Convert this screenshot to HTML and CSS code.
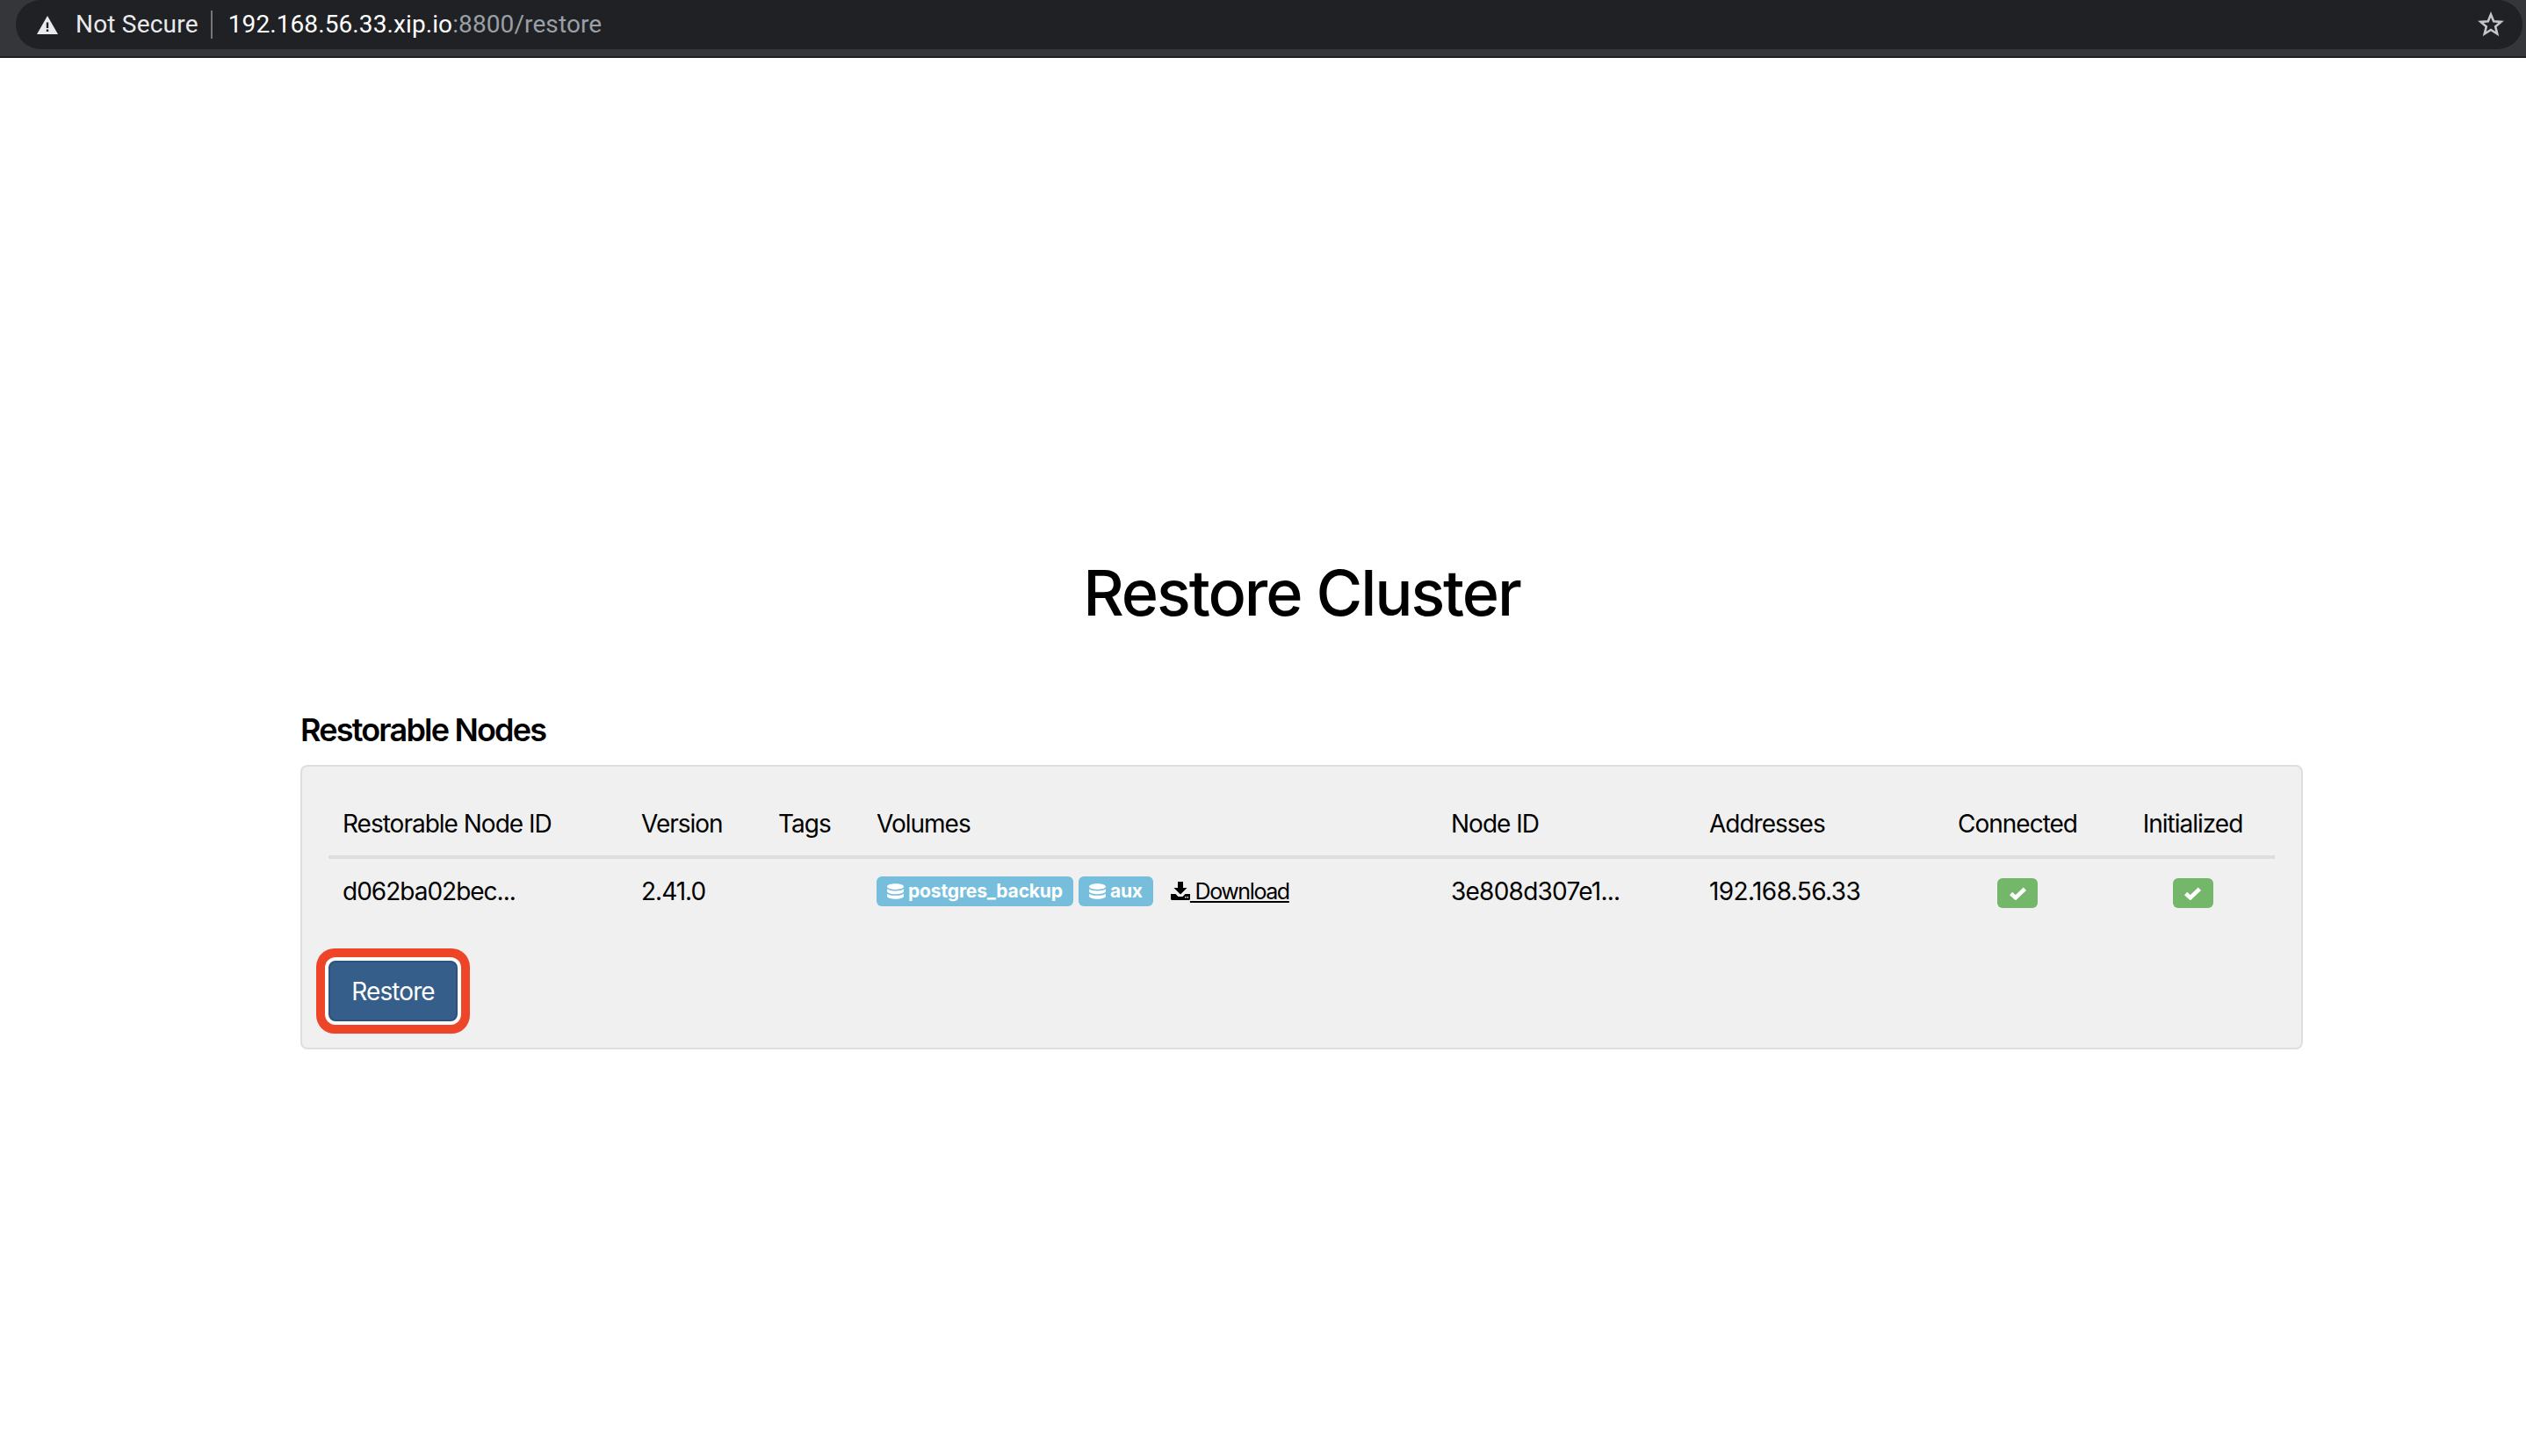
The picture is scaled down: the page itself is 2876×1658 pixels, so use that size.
FILE: index.html
```html
<!DOCTYPE html>
<html lang="en">
<head>
<meta charset="utf-8">
<title>Restore Cluster</title>
<link rel="stylesheet" href="styles.css">
</head>
<body>
<header class="browser-bar">
  <div class="omnibox">
    <svg class="warn-icon" viewBox="0 0 24 21"><path fill="#e8eaed" fill-rule="evenodd" d="M12 0 24 21H0ZM10.8 7.5v6.5h2.4V7.5ZM10.8 15.5v2.5h2.4v-2.5Z"/></svg>
    <span class="security">Not Secure</span>
    <span class="divider"></span>
    <span class="url">192.168.56.33.xip.io<span class="url-dim">:8800/restore</span></span>
    <svg class="star-icon" viewBox="0 0 30 30"><path fill="none" stroke="#c4c6c9" stroke-width="2.6" stroke-linejoin="miter" d="M15 3.5 18.2 11.3 26.6 11.9 20.2 17.3 22.2 25.5 15 21 7.8 25.5 9.8 17.3 3.4 11.9 11.8 11.3Z"/></svg>
  </div>
</header>
<main class="page">
  <h1 class="title">Restore Cluster</h1>
  <h2 class="section-title">Restorable Nodes</h2>
  <section class="panel">
    <table class="nodes">
      <colgroup>
        <col class="c-id"><col class="c-ver"><col class="c-tags"><col class="c-vol"><col class="c-node"><col class="c-addr"><col class="c-conn"><col class="c-init">
      </colgroup>
      <thead>
        <tr>
          <th>Restorable Node ID</th><th>Version</th><th>Tags</th><th>Volumes</th><th>Node ID</th><th>Addresses</th><th class="center">Connected</th><th class="center">Initialized</th>
        </tr>
      </thead>
      <tbody>
        <tr>
          <td>d062ba02bec...</td>
          <td>2.41.0</td>
          <td></td>
          <td>
            <div class="volumes">
              <span class="label info"><svg class="db-icon" viewBox="0 0 24 26"><path fill="#fff" d="M12 0c6.6 0 12 1.8 12 4.2S18.6 8.4 12 8.4 0 6.600 0 4.200 5.400 0 12 0ZM0 7.600c2.500 1.900 7 2.700 12 2.700s9.500-.8 12-2.700v3.400c0 2.300-5.400 4.100-12 4.100S0 13.300 0 11ZM0 14.400c2.500 1.900 7 2.700 12 2.700s9.500-.8 12-2.700v3.400c0 2.300-5.400 4.100-12 4.100S0 20.100 0 17.800Z" transform="translate(0 2)"/></svg>postgres_backup</span>
              <span class="label info"><svg class="db-icon" viewBox="0 0 24 26"><path fill="#fff" d="M12 0c6.6 0 12 1.8 12 4.2S18.6 8.4 12 8.4 0 6.600 0 4.200 5.400 0 12 0ZM0 7.600c2.500 1.900 7 2.700 12 2.700s9.500-.8 12-2.700v3.400c0 2.300-5.400 4.100-12 4.100S0 13.300 0 11ZM0 14.400c2.500 1.900 7 2.700 12 2.700s9.500-.8 12-2.700v3.400c0 2.300-5.400 4.100-12 4.100S0 20.100 0 17.800Z" transform="translate(0 2)"/></svg>aux</span>
              <a class="download" href="#"><svg class="dl-icon" viewBox="0 0 22 21"><path fill="#000" d="M8 0h6v7h4.500L11 14.500 3.500 7H8ZM0 14h5.500l3 3h5l3-3H22v5.500c0 .8-.7 1.500-1.500 1.500h-19C.7 21 0 20.300 0 19.500Z"/><rect x="16" y="17" width="1.500" height="1.500" fill="#f0f0f0"/><rect x="18.500" y="17" width="1.500" height="1.500" fill="#f0f0f0"/></svg> Download</a>
            </div>
          </td>
          <td class="node-id">3e808d307e1...</td>
          <td class="addr">192.168.56.33</td>
          <td class="center"><span class="label ok"><svg class="check-icon" viewBox="0 0 18 14"><path fill="none" stroke="#fff" stroke-width="4.4" d="M1.500 7 6.500 11.500 16.500 2"/></svg></span></td>
          <td class="center"><span class="label ok"><svg class="check-icon" viewBox="0 0 18 14"><path fill="none" stroke="#fff" stroke-width="4.4" d="M1.500 7 6.500 11.500 16.500 2"/></svg></span></td>
        </tr>
      </tbody>
    </table>
    <button class="restore" type="button">Restore</button>
  </section>
</main>
</body>
</html>
```

FILE: styles.css
```css
* { box-sizing: border-box; }
html, body { margin: 0; padding: 0; background: #fff; }
body { font-family: Inter, "Liberation Sans", sans-serif; color: #000; font-size: 28px; }

.browser-bar { height: 66px; background: #35363a; border-bottom: 2px solid #1f2023; padding-left: 18px; padding-right: 4px; }
.omnibox { height: 56px; background: #202124; border-radius: 28px; display: flex; align-items: center; padding-left: 25px; padding-right: 21px; }
.warn-icon { width: 24px; height: 21px; flex: none; margin-left: -1px; }
.security { margin-left: 20px; color: #e8eaed; font-family: Roboto, sans-serif; font-size: 28px; line-height: 56px; letter-spacing: 0.2px; }
.divider { width: 2px; height: 32px; background: #75767a; margin-left: 14px; margin-right: 18px; }
.url { color: #fff; font-family: Roboto, sans-serif; font-size: 28px; line-height: 56px; letter-spacing: 0.1px; }
.url-dim { color: #9aa0a6; }
.star-icon { width: 30px; height: 30px; margin-left: auto; flex: none; }

.page { padding: 0 254px 0 342px; }
.title { margin: 0; padding-top: 566px; text-align: center; font-size: 72px; line-height: 86px; font-weight: 500; letter-spacing: -2.1px; }
.section-title { margin: 91px 0 0; font-size: 36px; line-height: 44px; font-weight: 600; letter-spacing: -1.8px; }
.panel { margin-top: 18px; height: 324px; background: #f0f0f0; border: 2px solid #dedede; border-radius: 8px; padding: 30px; }

.nodes { width: 2216px; table-layout: fixed; border-collapse: collapse; line-height: 40px; letter-spacing: -1px; }
.c-id { width: 340px; } .c-ver { width: 156px; } .c-tags { width: 112px; } .c-vol { width: 654px; }
.c-node { width: 294px; } .c-addr { width: 261px; } .c-conn { width: 212px; } .c-init { width: 187px; }
.nodes th { font-weight: 400; text-align: left; padding: 15px 16px 16px; border-bottom: 4px solid #dedede; white-space: nowrap; }
.nodes td { padding: 16px; height: 76px; white-space: nowrap; vertical-align: middle; }
.nodes .center { text-align: center; }
.nodes .node-id { letter-spacing: -0.75px; }
.nodes .addr { letter-spacing: -0.6px; }

.volumes { display: flex; align-items: center; }
.label { display: inline-flex; align-items: center; justify-content: center; height: 34px; border-radius: 6px; color: #fff; font-size: 21px; font-weight: 700; line-height: 36px; vertical-align: middle; letter-spacing: -0.15px; }
.info { background: #76bedc; padding: 0 12px; margin-right: 6px; }
.ok { background: #74b76a; width: 46px; }
.db-icon { width: 19px; height: 22px; margin-right: 5px; flex: none; }
.check-icon { width: 19px; height: 15px; }
.download { margin-left: 14px; color: #000; font-size: 25px; line-height: 34px; white-space: pre; letter-spacing: -1.4px; }
.dl-icon { width: 22px; height: 21px; vertical-align: -1px; }

.restore { display: block; margin-top: 42px; width: 147px; height: 69px; padding: 0; background: #355e8a; border: 2px solid #2e5279; border-radius: 8px; color: #fff; font-family: Inter, sans-serif; font-size: 28px; letter-spacing: -0.9px; box-shadow: 0 0 0 4px #fff, 0 0 0 14px #ee4427; }
```
